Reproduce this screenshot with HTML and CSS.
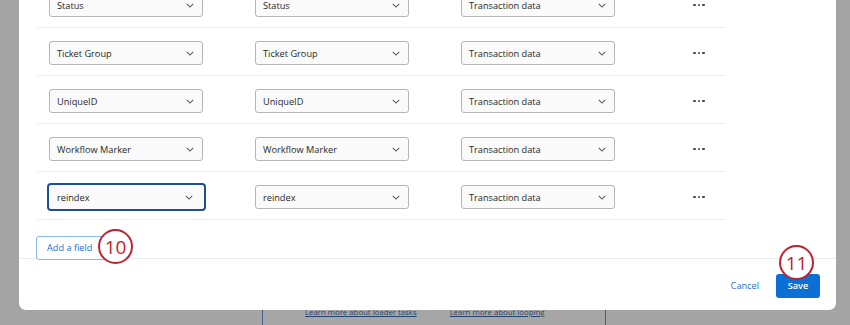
FILE: index.html
```html
<!DOCTYPE html>
<html>
<head>
<meta charset="utf-8">
<link rel="stylesheet" href="styles.css">
</head>
<body>
<div class="page">
  <div class="under-panel">
    <a class="under-link">Learn more about loader tasks</a>
    <a class="under-link">Learn more about looping</a>
  </div>
</div>

<div class="modal">
  <div class="rows">
    <div class="row">
      <div class="select"><span>Status</span><svg class="chev" viewBox="0 0 10 6"><path d="M1 1l4 4 4-4"/></svg></div>
      <div class="select"><span>Status</span><svg class="chev" viewBox="0 0 10 6"><path d="M1 1l4 4 4-4"/></svg></div>
      <div class="select"><span>Transaction data</span><svg class="chev" viewBox="0 0 10 6"><path d="M1 1l4 4 4-4"/></svg></div>
      <div class="more"><i></i><i></i><i></i></div>
    </div>
    <div class="row">
      <div class="select"><span>Ticket Group</span><svg class="chev" viewBox="0 0 10 6"><path d="M1 1l4 4 4-4"/></svg></div>
      <div class="select"><span>Ticket Group</span><svg class="chev" viewBox="0 0 10 6"><path d="M1 1l4 4 4-4"/></svg></div>
      <div class="select"><span>Transaction data</span><svg class="chev" viewBox="0 0 10 6"><path d="M1 1l4 4 4-4"/></svg></div>
      <div class="more"><i></i><i></i><i></i></div>
    </div>
    <div class="row">
      <div class="select"><span>UniqueID</span><svg class="chev" viewBox="0 0 10 6"><path d="M1 1l4 4 4-4"/></svg></div>
      <div class="select"><span>UniqueID</span><svg class="chev" viewBox="0 0 10 6"><path d="M1 1l4 4 4-4"/></svg></div>
      <div class="select"><span>Transaction data</span><svg class="chev" viewBox="0 0 10 6"><path d="M1 1l4 4 4-4"/></svg></div>
      <div class="more"><i></i><i></i><i></i></div>
    </div>
    <div class="row">
      <div class="select"><span>Workflow Marker</span><svg class="chev" viewBox="0 0 10 6"><path d="M1 1l4 4 4-4"/></svg></div>
      <div class="select"><span>Workflow Marker</span><svg class="chev" viewBox="0 0 10 6"><path d="M1 1l4 4 4-4"/></svg></div>
      <div class="select"><span>Transaction data</span><svg class="chev" viewBox="0 0 10 6"><path d="M1 1l4 4 4-4"/></svg></div>
      <div class="more"><i></i><i></i><i></i></div>
    </div>
    <div class="row">
      <div class="select focused"><span>reindex</span><svg class="chev" viewBox="0 0 10 6"><path d="M1 1l4 4 4-4"/></svg></div>
      <div class="select"><span>reindex</span><svg class="chev" viewBox="0 0 10 6"><path d="M1 1l4 4 4-4"/></svg></div>
      <div class="select"><span>Transaction data</span><svg class="chev" viewBox="0 0 10 6"><path d="M1 1l4 4 4-4"/></svg></div>
      <div class="more"><i></i><i></i><i></i></div>
    </div>
  </div>

  <div class="add-area">
    <button class="add-btn">Add a field</button>
    <span class="badge badge-10">10</span>
  </div>

  <div class="footer">
    <button class="cancel-btn">Cancel</button>
    <button class="save-btn">Save</button>
    <span class="badge badge-11">11</span>
  </div>
</div>
</body>
</html>
```

FILE: styles.css
```css
* { box-sizing: border-box; }
html, body {
  margin: 0;
  width: 850px;
  height: 325px;
  overflow: hidden;
}
body {
  position: relative;
  font-family: "Open Sans", "Liberation Sans", sans-serif;
  background-color: #a4a4a4;
  background-image: radial-gradient(circle, #b2b2b2 0.7px, transparent 1px);
  background-size: 9px 9px;
  background-position: 2px 1px;
}
.page {
  height: 325px;
  display: flex;
  justify-content: flex-start;
}
.under-panel {
  margin-left: 262px;
  margin-top: 300px;
  width: 344px;
  height: 40px;
  border-left: 1.5px solid #3f5f8c;
  border-right: 1.5px solid #3f5f8c;
  background: #a6a6a6;
  display: flex;
  gap: 33px;
  padding: 7px 0 0 42px;
}
.under-link {
  font-size: 7.8px;
  color: #26456e;
  text-decoration: underline;
  white-space: nowrap;
}
.modal {
  position: absolute;
  left: 19px;
  top: 0;
  width: 817px;
  height: 310px;
  background: #fff;
  border-radius: 0 0 7px 7px;
  display: flex;
  flex-direction: column;
}
.rows {
  margin: -20px 110px 0 17px;
}
.row {
  display: flex;
  align-items: center;
  padding: 13px 0 10px 13px;
  border-bottom: 1px solid #efefef;
  height: 48px;
}
.select {
  width: 154px;
  height: 24px;
  border: 1px solid #b5b5b5;
  border-radius: 3px;
  background: #fafafa;
  display: flex;
  align-items: center;
  justify-content: space-between;
  padding: 0 8px 0 7px;
  font-size: 9.2px;
  color: #26292c;
  margin-right: 52px;
  flex: none;
}
.select:nth-child(3) { margin-right: 78px; }
.select.focused {
  width: 159px;
  height: 28px;
  margin-left: -2px;
  margin-right: 49px;
  padding-left: 8px;
  padding-right: 11px;
  border: 2px solid #1c4f95;
  border-radius: 4px;
}
.chev {
  width: 8px;
  height: 5px;
  fill: none;
  stroke: #55595e;
  stroke-width: 1.3;
}
.more {
  display: flex;
  gap: 1.8px;
  margin-top: 0;
}
.more i {
  width: 2.8px;
  height: 2.8px;
  background: #454545;
  border-radius: 50%;
}
.add-area {
  position: relative;
  padding: 14px 0 0 17px;
  height: 39px;
  border-bottom: 1px solid #ececec;
}
.add-btn {
  height: 24px;
  width: 72px;
  padding: 0 0 0 10px;
  text-align: left;
  border: 1px solid #8bb8ea;
  border-radius: 3px;
  background: #fff;
  color: #1c6fd1;
  font-family: inherit;
  font-size: 9.2px;
}
.badge {
  position: absolute;
  width: 35px;
  height: 35px;
  border: 2.5px solid #c3202e;
  border-radius: 50%;
  background: #fff;
  color: #c3202e;
  font-size: 19px;
  display: flex;
  align-items: center;
  justify-content: center;
  font-family: "Open Sans", "Liberation Sans", sans-serif;
}
.badge-10 { left: 79px; top: 9px; }
.footer {
  position: relative;
  flex: 1;
  display: flex;
  align-items: center;
  justify-content: flex-end;
  padding: 2px 16px 0 0;
}
.cancel-btn {
  border: none;
  background: none;
  color: #1c6fd1;
  font-family: inherit;
  font-size: 9.2px;
  padding: 0;
  margin-right: 17px;
}
.save-btn {
  width: 44px;
  height: 24px;
  border: none;
  border-radius: 3px;
  background: #0b6fd6;
  color: #fff;
  font-family: inherit;
  font-size: 9.2px;
  font-weight: 600;
}
.badge-11 { right: 22px; top: -14px; }
```
